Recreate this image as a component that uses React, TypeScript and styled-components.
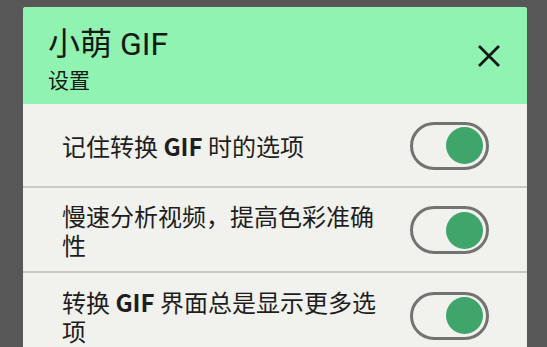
import React, { useState } from "react";
import styled, { createGlobalStyle } from "styled-components";

const Global = createGlobalStyle`
  html, body { margin: 0; padding: 0; background: #575757; overflow: hidden; }
  body { font-family: Roboto, "Noto Sans CJK SC", sans-serif; }
`;

const Page = styled.div`
  width: 547px;
  height: 347px;
  padding: 7px 20px 0 23px;
  box-sizing: border-box;
`;

const Dialog = styled.div`
  width: 504px;
  border-radius: 3px 3px 0 0;
  overflow: hidden;
  background: #f1f1ed;
`;

const Header = styled.div`
  height: 97px;
  box-sizing: border-box;
  background: #91f3b1;
  display: flex;
  align-items: center;
  padding: 0 20px 0 25px;
`;

const Titles = styled.div`
  flex: 1;
  display: flex;
  flex-direction: column;
  padding: 18px 0 12px;
`;

const Title = styled.div`
  font-family: Roboto, "Noto Sans CJK SC", sans-serif;
  font-size: 32px;
  line-height: 38px;
  color: #141a16;
`;

const Subtitle = styled.div`
  font-family: "Noto Sans CJK SC", sans-serif;
  font-size: 21px;
  line-height: 26px;
  margin-top: 3px;
  color: #141a16;
`;

const CloseButton = styled.button`
  width: 36px;
  height: 36px;
  padding: 0;
  border: none;
  background: transparent;
  display: flex;
  align-items: center;
  justify-content: center;
  color: #151a16;
`;

const List = styled.div`
  display: flex;
  flex-direction: column;
`;

const Row = styled.div<{ $last?: boolean }>`
  min-height: 84px;
  box-sizing: border-box;
  padding: 13px 38px 12px 39px;
  display: flex;
  align-items: center;
  gap: 24px;
  border-bottom: ${(p) => (p.$last ? "none" : "2px solid #c9c9c6")};
`;

const Label = styled.div`
  flex: 1;
  font-family: "Noto Sans CJK SC", Roboto, sans-serif;
  font-size: 24px;
  line-height: 29px;
  color: #1e1e1e;
  b { font-weight: 700; }
`;

const Track = styled.button<{ $on: boolean }>`
  width: 79px;
  height: 48px;
  flex: none;
  box-sizing: border-box;
  border: 3px solid #737371;
  border-radius: 24px;
  background: transparent;
  padding: 0 3px;
  display: flex;
  align-items: center;
  justify-content: ${(p) => (p.$on ? "flex-end" : "flex-start")};
  cursor: pointer;
`;

const Thumb = styled.span<{ $on: boolean }>`
  width: 37px;
  height: 37px;
  border-radius: 50%;
  background: ${(p) => (p.$on ? "#3fa56b" : "#9e9e9e")};
`;

const Toggle: React.FC<{ initial: boolean }> = ({ initial }) => {
  const [on, setOn] = useState(initial);
  return (
    <Track $on={on} onClick={() => setOn(!on)} aria-pressed={on}>
      <Thumb $on={on} />
    </Track>
  );
};

const CloseIcon = () => (
  <svg width="22" height="22" viewBox="0 0 22 22">
    <path d="M1 1 L21 21 M21 1 L1 21" stroke="currentColor" strokeWidth="2.8" strokeLinecap="butt" />
  </svg>
);

export default function App() {
  return (
    <>
      <Global />
      <Page>
        <Dialog>
          <Header>
            <Titles>
              <Title>小萌 GIF</Title>
              <Subtitle>设置</Subtitle>
            </Titles>
            <CloseButton aria-label="关闭">
              <CloseIcon />
            </CloseButton>
          </Header>
          <List>
            <Row>
              <Label>
                记住转换 <b>GIF</b> 时的选项
              </Label>
              <Toggle initial={true} />
            </Row>
            <Row>
              <Label>慢速分析视频，提高色彩准确性</Label>
              <Toggle initial={true} />
            </Row>
            <Row $last>
              <Label>
                转换 <b>GIF</b> 界面总是显示更多选项
              </Label>
              <Toggle initial={true} />
            </Row>
          </List>
        </Dialog>
      </Page>
    </>
  );
}
